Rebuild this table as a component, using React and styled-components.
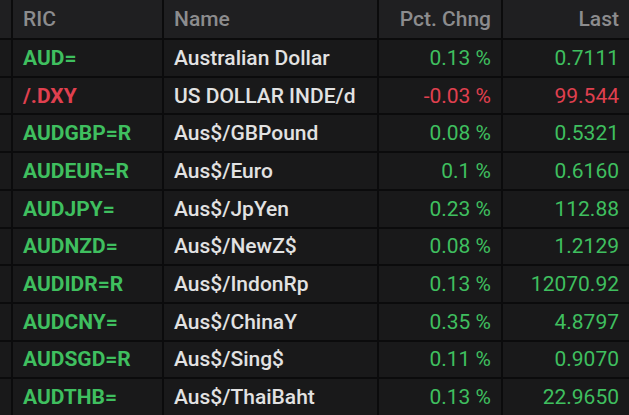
import React from "react";
import styled, { createGlobalStyle } from "styled-components";

const GlobalStyle = createGlobalStyle`
  html, body {
    margin: 0;
    padding: 0;
    background: #0c0c0d;
  }
  body {
    font-family: Roboto, "Liberation Sans", sans-serif;
  }
`;

const rows = [
  { ric: "AUD=", name: "Australian Dollar", pct: "0.13 %", last: "0.7111" },
  { ric: "/.DXY", name: "US DOLLAR INDE/d", pct: "-0.03 %", last: "99.544", down: true },
  { ric: "AUDGBP=R", name: "Aus$/GBPound", pct: "0.08 %", last: "0.5321" },
  { ric: "AUDEUR=R", name: "Aus$/Euro", pct: "0.1 %", last: "0.6160" },
  { ric: "AUDJPY=", name: "Aus$/JpYen", pct: "0.23 %", last: "112.88" },
  { ric: "AUDNZD=", name: "Aus$/NewZ$", pct: "0.08 %", last: "1.2129" },
  { ric: "AUDIDR=R", name: "Aus$/IndonRp", pct: "0.13 %", last: "12070.92" },
  { ric: "AUDCNY=", name: "Aus$/ChinaY", pct: "0.35 %", last: "4.8797" },
  { ric: "AUDSGD=R", name: "Aus$/Sing$", pct: "0.11 %", last: "0.9070" },
  { ric: "AUDTHB=", name: "Aus$/ThaiBaht", pct: "0.13 %", last: "22.9650" },
];

const App = () => {
  return (
    <>
      <GlobalStyle />
      <Grid>
        <Row header>
          <Stub header />
          <Cell header>RIC</Cell>
          <Cell header>Name</Cell>
          <Cell header right>Pct. Chng</Cell>
          <Cell header right>Last</Cell>
        </Row>
        {rows.map((r) => (
          <Row key={r.ric}>
            <Stub />
            <Cell ric down={r.down}>{r.ric}</Cell>
            <Cell name>{r.name}</Cell>
            <Cell right value down={r.down}>{r.pct}</Cell>
            <Cell right value down={r.down}>{r.last}</Cell>
          </Row>
        ))}
      </Grid>
    </>
  );
};

const Grid = styled.div`
  width: 629px;
  height: 415px;
  display: flex;
  flex-direction: column;
  gap: 2px;
  overflow: hidden;
  background: #0b0b0c;
`;

const Row = styled.div`
  display: grid;
  grid-template-columns: 11px 149px 213px 122px 126px;
  column-gap: 2px;
  flex: ${(p) => (p.header ? "0 0 38px" : "1 1 0")};
`;

const Stub = styled.div`
  background: ${(p) => (p.header ? "#1f1f21" : "#19191a")};
`;

const Cell = styled.div`
  display: flex;
  align-items: center;
  justify-content: ${(p) => (p.right ? "flex-end" : "flex-start")};
  padding: ${(p) => (p.right ? "0 10px 0 0" : "0 0 0 10px")};
  background: ${(p) => (p.header ? "#1f1f21" : "#19191a")};
  font-size: 21px;
  white-space: nowrap;
  color: ${(p) =>
    p.header
      ? "#8c8c8e"
      : p.name
      ? "#e2e2e2"
      : p.down
      ? "#e0404f"
      : "#3fbf5f"};
  font-weight: ${(p) => (p.header ? 500 : p.ric ? 700 : p.name ? 500 : 400)};
`;

export default App;
